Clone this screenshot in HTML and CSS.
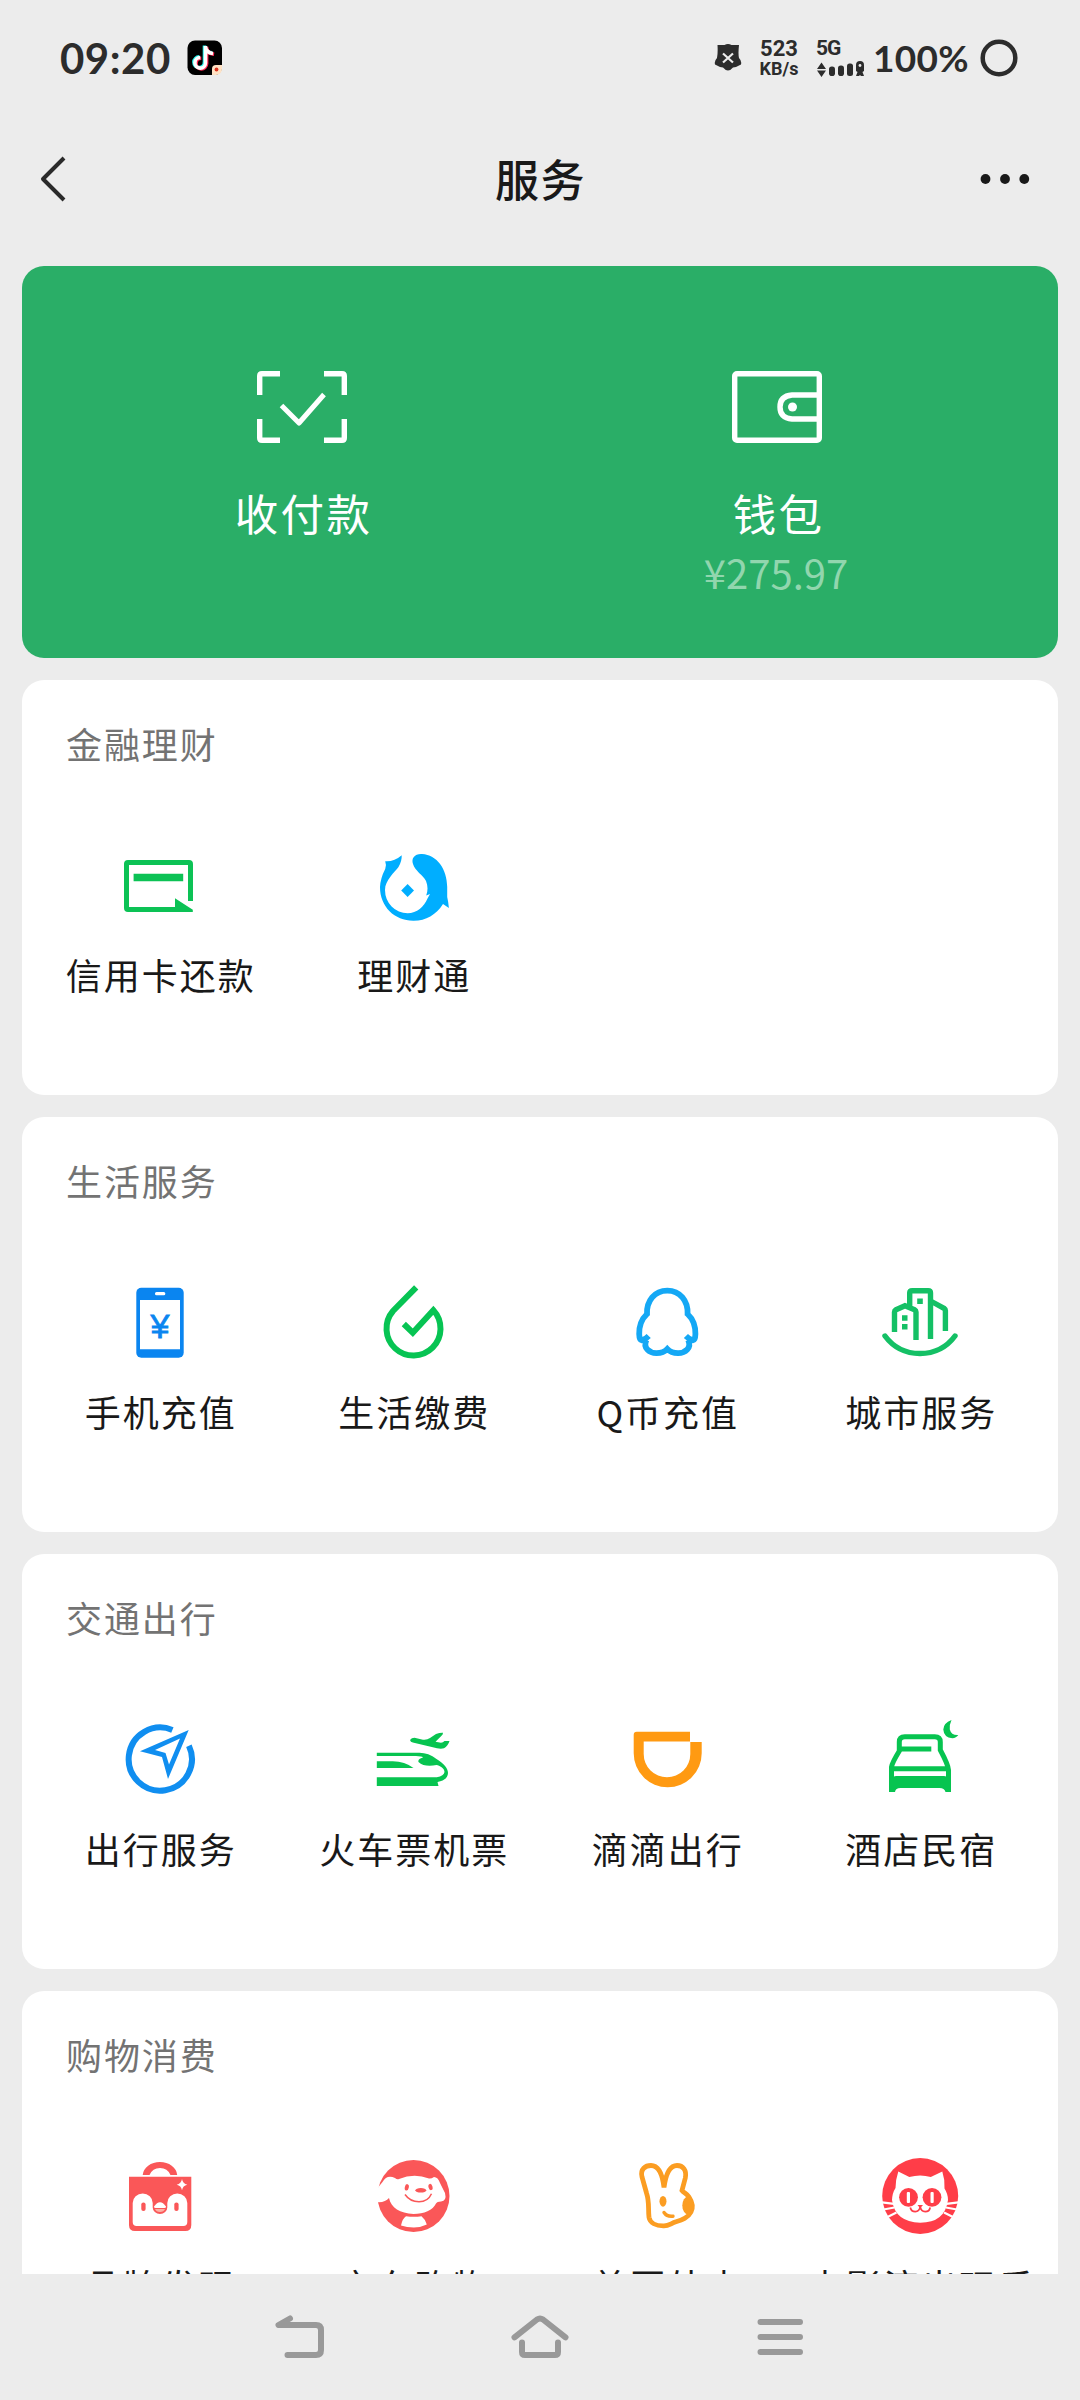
FILE: index.html
```html
<!DOCTYPE html>
<html lang="zh-CN">
<head>
<meta charset="utf-8">
<title>服务</title>
<link rel="stylesheet" href="styles.css">
</head>
<body>
<div class="screen">
  <div class="status">
    <span class="clock">09:20</span>
    <svg class="app-badge" width="36" height="36" viewBox="0 0 36 36">
      <rect x=".5" y=".5" width="34.5" height="34.5" rx="7.5" fill="#000"/>
      <g fill="none" stroke-width="3.6">
        <path d="M18.500 6v17a5.300 5.300 0 1 1-5.300-5.500M18.500 7c.5 4 3.500 6 7.500 6.500" stroke="#25f4ee" transform="translate(-1 -.6)"/>
        <path d="M18.500 6v17a5.300 5.300 0 1 1-5.300-5.500M18.500 7c.5 4 3.500 6 7.500 6.500" stroke="#fe2c55" transform="translate(1.100 .8)"/>
        <path d="M18.500 6v17a5.300 5.300 0 1 1-5.300-5.500M18.500 7c.5 4 3.500 6 7.500 6.500" stroke="#fff"/>
      </g>
      <path d="M25 29a4 4 0 0 1 4-4h6v4a6 6 0 0 1-6 6h-4z" fill="#ffe2c4"/>
      <circle cx="29.500" cy="29.500" r="1.900" fill="#d9331f"/>
    </svg>
    <span class="spacer"></span>
    <svg class="shield" width="28" height="30" viewBox="0 0 28 30">
      <path d="M3.500 2h7q3.500-1.800 7 0H25q-1 9 0 13 3 3 2 6.500-4 2.500-8 3-5 6-10 0-4-.5-8-3Q0 18 3 15q1-5 .5-13z" fill="#2c2c2c"/>
      <path d="M9 10.500l10 9M19 10.500l-10 9" stroke="#ececec" stroke-width="2.200"/>
    </svg>
    <span class="speed"><b class="rate">523</b><b class="unit">KB/s</b></span>
    <span class="network">
      <b class="gen">5G</b>
      <svg width="50" height="17" viewBox="0 0 50 17">
        <g fill="#2c2c2c">
          <path d="M1 8l4.500-6.500L10 8zM1 9.500h9L5.500 16z"/>
          <rect x="13" y="5.500" width="6" height="9.500" rx="2.800"/>
          <rect x="22" y="4.500" width="6" height="10.500" rx="2.800"/>
          <rect x="31" y="2.500" width="6" height="12.500" rx="2.500"/>
          <path d="M40 4q0-4 4-4t4 4v6l-1.500 1 1.500 4h-3l-1-1-1 1h-3l1.500-4-1.500-1z"/>
        </g>
        <circle cx="44" cy="4.500" r="1.400" fill="#ececec"/>
      </svg>
    </span>
    <span class="battery">100%</span>
    <svg class="ring" width="38" height="38" viewBox="0 0 38 38"><circle cx="19" cy="19" r="16.300" fill="none" stroke="#2c2c2c" stroke-width="4.500"/></svg>
  </div>

  <div class="navbar">
    <svg width="61" height="50" viewBox="0 0 61 50"><path d="M25 4L4 25l21 21" fill="none" stroke="#2a2a2a" stroke-width="4" stroke-linejoin="round"/></svg>
    <h1 class="title">服务</h1>
    <svg width="50" height="12" viewBox="0 0 50 12" fill="#191919"><circle cx="5.500" cy="6" r="4.900"/><circle cx="25" cy="6" r="4.900"/><circle cx="44.300" cy="6" r="4.900"/></svg>
  </div>

  <div class="cards">
    <div class="pay">
      <div class="pay-item">
        <svg width="94" height="76" viewBox="0 0 94 76" fill="none" stroke="#fff" stroke-width="5.400">
          <path d="M24 4.700H6q-2.300 0-2.300 2.300v19M68 4.700h18q2.300 0 2.300 2.300v19M24 71.300H6q-2.300 0-2.300-2.300V50M68 71.300h18q2.300 0 2.300-2.300V50"/>
          <path d="M25.500 36.500L43 54l25-28.500" stroke-width="5" stroke-linejoin="round"/>
        </svg>
        <span class="pay-label">收付款</span>
      </div>
      <div class="pay-item">
        <svg width="94" height="76" viewBox="0 0 94 76" fill="none" stroke="#fff" stroke-width="5.400">
          <rect x="3.700" y="4.700" width="84.600" height="66.600" rx="2.300"/>
          <path d="M88 26H61q-12 1-12 12t12 12h27"/>
          <circle cx="61.500" cy="38" r="4.500" fill="#fff" stroke="none"/>
        </svg>
        <span class="pay-label">钱包</span>
        <span class="balance">¥275.97</span>
      </div>
    </div>

    <section class="card">
      <h2 class="card-title">金融理财</h2>
      <div class="grid">
        <div class="item">
          <svg class="icon" viewBox="0 0 90 90">
            <path d="M60 68.500H13q-1.500 0-1.500-1.500V23q0-1.500 1.500-1.500h61q1.500 0 1.500 1.500v37" fill="none" stroke="#0cc255" stroke-width="5"/>
            <path d="M18.600 32.700h49.600v7.500H18.600zM60 57.300l17.800 11.500V71H60z" fill="#0cc255"/>
          </svg>
          <span class="label">信用卡还款</span>
        </div>
        <div class="item">
          <svg class="icon" viewBox="0 0 90 90" fill="#00aeff">
            <path d="M17.200 20.300Q26 21 33.700 14.300 34 20 30.500 26C27 31 17 39 17 49a22.700 23.300 0 0 0 22.600 23.300C49 72 56 66 59.500 57.500L62 53l-3.800 1.500C60 50 60 45 58 40 55 34 47 30 45 23 43 17 47 12.500 54 13 69 14 79 28 79.200 45.700V56q1.200 5 1.700 11L75 63C68 74 58 79.700 45.800 79.700 27 80 12 66 12 46q.5-9 5.200-18 1.500-4 0-7.700z"/>
            <path d="M39.600 43l6.400 6.600-6.400 6.400-6.400-6.400z"/>
          </svg>
          <span class="label">理财通</span>
        </div>
      </div>
    </section>

    <section class="card">
      <h2 class="card-title">生活服务</h2>
      <div class="grid">
        <div class="item">
          <svg class="icon" viewBox="0 0 90 90">
            <rect x="21.300" y="9.700" width="47.400" height="70" rx="5" fill="#0a85f0"/>
            <path d="M25 22h40v49.300H25z" fill="#fff"/>
            <rect x="40" y="14" width="10.300" height="3.200" rx="1.500" fill="#fff"/>
            <text class="yen" x="45" y="59.700" text-anchor="middle">¥</text>
          </svg>
          <span class="label">手机充值</span>
        </div>
        <div class="item">
          <svg class="icon" viewBox="0 0 90 90"><path d="M48.200 9.300L25 33a27 27 0 1 0 40.400 -.7L44.800 54.700 35.800 46" fill="none" stroke="#07c453" stroke-width="6"/></svg>
          <span class="label">生活缴费</span>
        </div>
        <div class="item">
          <svg class="icon" viewBox="0 0 90 90" fill="none" stroke="#14a8f5" stroke-width="5.800">
            <path d="M45.300 12.700C32.500 12.700 24.500 23 25 36q-8 7.500-7.800 20 .2 7 3 6.300 3.500-1.200 6.500-4.300M45.300 12.700C58.100 12.700 66.100 23 65.600 36q8 7.500 7.800 20-.2 7-3 6.300-3.500-1.200-6.500-4.300"/>
            <path d="M24.500 62C20.500 70 27.500 75 34.500 75.200q7-.2 10.800-4.200 3.800 4 10.800 4.200c7-.2 14-5.200 10-13.200"/>
          </svg>
          <span class="label">Q币充值</span>
        </div>
        <div class="item">
          <svg class="icon" viewBox="0 0 90 90" fill="none" stroke="#14c065" stroke-width="5.400">
            <path d="M10 58q13 17.500 35 17.500T80 58" stroke-linecap="round"/>
            <path d="M19.500 54V34q0-1.500 1.500-2.300l9-4 9.500 4q1.500.8 1.500 2.300v28M34.700 28V15q0-2.300 2.500-2.300h16q2.300 0 2.300 2.300v46M56.500 23.500L69 30.300q1.400 1 1.400 2.200V53"/>
            <path d="M42.200 20.500h5.600V26h-5.600zM27 37.300h5.500v5.400H27zM27 46h5.500v5.400H27z" fill="#14c065" stroke="none"/>
          </svg>
          <span class="label">城市服务</span>
        </div>
      </div>
    </section>

    <section class="card">
      <h2 class="card-title">交通出行</h2>
      <div class="grid">
        <div class="item">
          <svg class="icon" viewBox="0 0 90 90">
            <path d="M57.400 14.900a31.600 31.600 0 1 0 16.500 15.800" fill="none" stroke="#108ef0" stroke-width="6"/>
            <path d="M73.700 15L53 64 47 42 25 36.300zM65 23.500L40 35l10.500 3L54 49.500z" fill="#108ef0" fill-rule="evenodd"/>
          </svg>
          <span class="label">出行服务</span>
        </div>
        <div class="item">
          <svg class="icon" viewBox="0 0 90 90" fill="#07c450">
            <path d="M42 25q1.500-2.300 4.500-2.300l8.500 2q4 .5 7-1.700l6-4q4-1.500 7-1.300 0 1.800-1.500 3l-6 6 5.500 1q2-.2 3.500-1.700h5Q80 31 76 33.300q-3 .9-7 0L44.800 27.500Q42.500 27 42 25z"/>
            <path d="M8.800 37.700h42.700q9 0 17 6.300C76 49 80 53 80 58q-.2 7-10.500 9l1 4H8.800v-8.700h60Q76 61 76.500 57c0-4-5-6.500-8-7-7 1.500-14 1-18-3q-1-3 4.500-4.500-1-1.500-7-1.500H8.800z"/>
            <path d="M8.800 46.300h16q12 .2 20.700 6.700H8.800z"/>
          </svg>
          <span class="label">火车票机票</span>
        </div>
        <div class="item">
          <svg class="icon" viewBox="0 0 90 90"><path d="M14.700 16.700H68v9.700H21.700V39a23.200 23.200 0 0 0 46.600 0V26.900h11.400V38.300a34 34 0 0 1-68 0V19.700q0-3 3-3z" fill="#ff9a12"/></svg>
          <span class="label">滴滴出行</span>
        </div>
        <div class="item">
          <svg class="icon" viewBox="0 0 90 90">
            <path d="M16.500 64V52q.5-4 7.800-16V27q0-5.300 5.500-5.300h30q5.500 0 5.500 5.300v8q8 15 8.200 20v9M25 34h31.300M18 53.700h55" fill="none" stroke="#07c450" stroke-width="5"/>
            <path d="M14 64q4-3 7-3h48q4 0 7 3v13h-5.500q-1-4-6-4h-39Q20.500 73 20 77h-6z" fill="#07c450"/>
            <path d="M76.500 5q-8 3-8.200 9.500.5 8 9 8.700 4-.2 6-3.200-7 .5-8.500-5.500-.5-5 1.700-9.500z" fill="#07c450"/>
          </svg>
          <span class="label">酒店民宿</span>
        </div>
      </div>
    </section>

    <section class="card">
      <h2 class="card-title">购物消费</h2>
      <div class="grid">
        <div class="item">
          <svg class="icon" viewBox="0 0 90 90" fill="#fa5758">
            <path d="M27.700 23a17.300 14 0 0 1 34.500 0H55.500q-3-7-10.500-7t-10.500 7z"/>
            <path d="M14 24.700h62.300V73q0 6-6 6H20q-6 0-6-6z"/>
            <path d="M17.700 51a10 9.500 0 0 1 20 0v4.500a7.300 6.500 0 0 0 14.600 0V51a10 9.500 0 0 1 20 0v19q0 4-4 4H21.700q-4 0-4-4z" fill="#fff"/>
            <path d="M39 54.500q6-8.500 12 0 0 1.600-1.500 1.600h-9Q39 56.100 39 54.500z" fill="#fff"/>
            <path d="M40 57h10q-1 3-5 3t-5-3z" fill="#fdb1a5"/>
            <rect x="26.300" y="50.500" width="4.300" height="8.500" rx="2.100"/><rect x="59.300" y="50.500" width="4.300" height="8.500" rx="2.100"/>
            <path d="M67 27q.8 4.800 5.300 5.700-4.500.8-5.300 5.600-.8-4.800-5.300-5.600Q66.200 31.800 67 27z" fill="#fff"/>
          </svg>
          <span class="label">品牌发现</span>
        </div>
        <div class="item">
          <svg class="icon" viewBox="0 0 90 90" fill="#fa5758">
            <circle cx="45.500" cy="44" r="36"/>
            <path d="M8 38L14.500 30Q19 22 27 26q2 1.800 4 1 15-6 30-.5 2 .5 5-1.500 4 0 6 6l5 10q2 8-4 8.500-4 0-5 2C65 58 56 62 45.500 62 32 61 23 56 21 46q-4 5-13 4z" fill="#fff"/>
            <path d="M33 73.500q1.500-7 5-9.200 8 1 15.500 0Q57 67 58.800 72.500q-6 3-13 3t-12.800-2z" fill="#fff"/>
            <ellipse cx="38.800" cy="35.300" rx="2" ry="3.200" transform="rotate(12 38.800 35.300)"/><ellipse cx="62.500" cy="35" rx="2" ry="3.200" transform="rotate(-15 62.500 35)"/>
            <ellipse cx="52.800" cy="38.300" rx="5.400" ry="2.300"/>
            <path d="M37 42.500q5 7.200 14 7.200t12.500-8" fill="none" stroke="#fa5758" stroke-width="1.500"/>
          </svg>
          <span class="label">京东购物</span>
        </div>
        <div class="item">
          <svg class="icon" viewBox="0 0 90 90" fill="#fb9d22">
            <path d="M20 25C18 17 23.500 13.500 29 13.500c8 0 11.500 9 13 22C43.500 24 47 13.500 55 13.500c6 0 10 5 8.300 12.500L60 38.500c2 2.500 5 3 7 6.500 4 6 4.500 10 2 15-3 6-9 8-15 9.800-5 1.500-7 4-12 4.100-8 .2-14-3-15-8.600C26 56 27.500 50 24.500 41z" fill="none" stroke="#fb9d22" stroke-width="4.800"/>
            <ellipse cx="41" cy="49.300" rx="3.500" ry="5.400"/><ellipse cx="66" cy="53.500" rx="5.700" ry="9"/>
            <path d="M42 60.500q3 4.500 9 3.700" fill="none" stroke="#fb9d22" stroke-width="3.400" stroke-linecap="round"/>
          </svg>
          <span class="label">美团外卖</span>
        </div>
        <div class="item">
          <svg class="icon" viewBox="0 0 90 90" fill="#ff3d48">
            <circle cx="45.200" cy="44" r="38"/>
            <path d="M23.300 19.500l11 5.500q11-3 21.500 0l11.500-5.500q2.700 8 2.200 17Q73 42 73 48 70 70.700 45.200 70.700 20 70 17 48q.3-7 3.500-12 0-8 2.800-16.500z" fill="#fff"/>
            <path d="M7 50.300l12 1.500M8.500 57.500l11-2M12.500 65l9-4.500M83.400 50.300l-12 1.500M81.900 57.500l-11-2M78 65l-9-4.500" stroke="#fff" stroke-width="2.200"/>
            <circle cx="33.500" cy="45.300" r="9.400"/><circle cx="57" cy="45.300" r="9.400"/>
            <rect x="31.800" y="40" width="3.200" height="11" rx="1" fill="#fff"/><rect x="55.500" y="40" width="3.200" height="11" rx="1" fill="#fff"/>
            <path d="M42.500 53h5.500l-2.800 3.200z"/>
            <path d="M35.300 55.500q1 4.200 5 4.200t4.900-5q.8 5 5 5t5-4.200" fill="none" stroke="#ff3d48" stroke-width="1.700"/>
          </svg>
          <span class="label">电影演出玩乐</span>
        </div>
      </div>
    </section>
  </div>

  <div class="keys">
    <svg width="60" height="60" viewBox="0 0 60 60"><path d="M20 11.500L8.500 18H46q5 0 5 5v20q0 5-5 5H17.500"/></svg>
    <svg width="60" height="60" viewBox="0 0 60 60"><path d="M4.500 30.300L27 12.500q3-2 6 0l22.500 17.800M12 35.500V45q0 3 3 3h30q3 0 3-3v-9.500"/></svg>
    <svg width="60" height="60" viewBox="0 0 60 60"><path d="M10.500 15h39.500M10.500 30h39.500M10.500 45h39.500"/></svg>
  </div>
</div>
</body>
</html>
```
FILE: styles.css
```css
* {
  box-sizing: border-box;
  margin: 0;
  padding: 0;
}

body {
  background: #ececec;
  font-family: "Noto Sans CJK SC", sans-serif;
  color: #191919;
}

svg {
  display: block;
  flex: none;
}

.screen {
  width: 1080px;
  height: 2400px;
  display: flex;
  flex-direction: column;
  overflow: hidden;
  background: #ececec;
}

.status {
  flex: none;
  height: 116px;
  padding: 0 62px 0 60px;
  display: flex;
  align-items: center;
  font-family: Lato, "Noto Sans", sans-serif;
  color: #2c2c2c;
}

.clock {
  width: 127px;
  font-size: 42px;
  font-weight: 700;
  letter-spacing: .5px;
  line-height: 50px;
}

.spacer {
  flex: 1;
}

.shield {
  margin-right: 15px;
}

.speed {
  width: 44px;
  margin-right: 15px;
  display: flex;
  flex-direction: column;
  align-items: center;
  font-family: Roboto, sans-serif;
}

.rate {
  font-size: 22px;
  line-height: 21px;
}

.unit {
  font-size: 18px;
  line-height: 19px;
}

.network {
  width: 57px;
  height: 40px;
  display: flex;
  flex-direction: column;
  font-family: Roboto, sans-serif;
}

.gen {
  font-size: 21px;
  line-height: 20px;
  letter-spacing: -1px;
}

.network svg {
  margin-top: 3px;
}

.battery {
  width: 107px;
  font-size: 37px;
  font-weight: 700;
  letter-spacing: .3px;
  line-height: 50px;
}

.navbar {
  flex: none;
  height: 126px;
  padding: 0 50px 0 39px;
  display: flex;
  align-items: center;
  justify-content: space-between;
}

.title {
  padding: 0 0 2px 1px;
  font-size: 44px;
  font-weight: 500;
  letter-spacing: 1.500px;
  line-height: 62px;
}

.cards {
  flex: 1;
  min-height: 0;
  padding: 24px 22px 0;
  display: flex;
  flex-direction: column;
  gap: 22px;
  overflow: hidden;
}

.pay {
  flex: none;
  height: 392px;
  padding: 103px 43px 0;
  display: grid;
  grid-template-columns: 1fr 1fr;
  border-radius: 22px;
  background: #2aae67;
  color: #fff;
}

.pay-item {
  display: flex;
  flex-direction: column;
  align-items: center;
}

.pay-label {
  margin-top: 36px;
  padding-left: 2px;
  font-size: 43.500px;
  letter-spacing: 2.300px;
  line-height: 64px;
}

.balance {
  padding-right: 3px;
  font-size: 40px;
  line-height: 54px;
  color: #91d6ae;
}

.card {
  flex: none;
  height: 415px;
  padding: 38px 11px 0;
  border-radius: 22px;
  background: #fff;
}

.card-title {
  padding-left: 33px;
  font-size: 36px;
  font-weight: 400;
  letter-spacing: 1.900px;
  line-height: 50px;
  color: #737373;
}

.grid {
  margin-top: 73px;
  display: grid;
  grid-template-columns: repeat(4, 1fr);
}

.item {
  display: flex;
  flex-direction: column;
  align-items: center;
}

.icon {
  width: 90px;
  height: 90px;
}

.yen {
  font: 34px "Liberation Sans", sans-serif;
  fill: #0a85f0;
  stroke: #0a85f0;
  stroke-width: .8px;
}

.label {
  margin-top: 18px;
  padding-left: 2px;
  font-size: 36px;
  letter-spacing: 2px;
  line-height: 50px;
  white-space: nowrap;
}

.keys {
  flex: none;
  height: 126px;
  padding: 33px 270px 0;
  display: flex;
  align-items: flex-start;
  justify-content: space-between;
  background: #ececec;
}

.keys path {
  fill: none;
  stroke: #999;
  stroke-width: 6;
  stroke-linecap: round;
  stroke-linejoin: round;
}
```
